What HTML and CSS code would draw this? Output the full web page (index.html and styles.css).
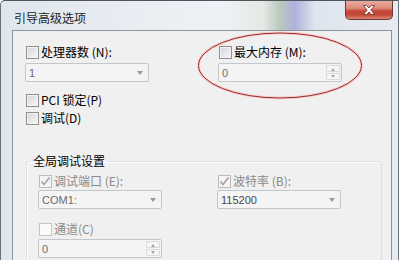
FILE: index.html
```html
<!DOCTYPE html>
<html lang="zh-CN">
<head>
  <meta charset="UTF-8">
  <title>引导高级选项</title>
  <link rel="stylesheet" href="styles.css">
</head>
<body>
<div class="window">
  <div class="titlebar">
    <span class="title">引导高级选项</span>
    <div class="close-btn">
      <svg width="12" height="10" viewBox="0 0 12 10">
        <path d="M0.5 0.5 L3.6 0.5 L6 3 L8.4 0.5 L11.5 0.5 L7.8 5 L11.5 9.5 L8.4 9.5 L6 7 L3.6 9.5 L0.5 9.5 L4.2 5 Z" fill="#fff" stroke="#6a2c24" stroke-width="0.8"/>
      </svg>
    </div>
  </div>

  <div class="frame">
    <div class="pane">
      <div class="two-col">
        <div class="field">
          <label class="check-label"><span class="cb"></span>处理器数 (N):</label>
          <div class="combo"><span class="value">1</span><span class="arrow"></span></div>
        </div>
        <div class="field">
          <label class="check-label"><span class="cb"></span>最大内存 (M):</label>
          <div class="combo spin"><span class="value">0</span>
            <span class="spin-btns"><span class="up"></span><span class="down"></span></span>
          </div>
        </div>
      </div>

      <label class="check-label row-pci"><span class="cb"></span>PCI 锁定(P)</label>
      <label class="check-label row-debug"><span class="cb"></span>调试(D)</label>

      <fieldset class="group">
        <legend>全局调试设置</legend>
        <div class="group-body">
          <div class="two-col inner">
            <div class="field">
              <label class="check-label disabled"><span class="cb checked"><svg width="11" height="11" viewBox="0 0 11 11"><path d="M1.5 5.5 L4 8.5 L9.5 1.5" fill="none" stroke="#a3a3a3" stroke-width="1.6"/></svg></span>调试端口 (E):</label>
              <div class="combo small"><span class="value">COM1:</span><span class="arrow"></span></div>
            </div>
            <div class="field">
              <label class="check-label disabled"><span class="cb checked"><svg width="11" height="11" viewBox="0 0 11 11"><path d="M1.5 5.5 L4 8.5 L9.5 1.5" fill="none" stroke="#a3a3a3" stroke-width="1.6"/></svg></span>波特率 (B):</label>
              <div class="combo small dark"><span class="value">115200</span><span class="arrow"></span></div>
            </div>
          </div>
          <div class="field row-channel">
            <label class="check-label disabled"><span class="cb light"></span>通道(C)</label>
            <div class="combo spin"><span class="value">0</span>
              <span class="spin-btns"><span class="up"></span><span class="down"></span></span>
            </div>
          </div>
        </div>
      </fieldset>
    </div>
  </div>

  <svg class="mark" width="399" height="260" viewBox="0 0 399 260">
    <ellipse cx="280" cy="65.5" rx="81.5" ry="32.5" fill="none" stroke="#f7cfcf" stroke-width="3"/>
    <ellipse cx="280" cy="65.5" rx="81.5" ry="32.5" fill="none" stroke="#9b2a2a" stroke-width="1"/>
  </svg>
</div>
</body>
</html>
```

FILE: styles.css
```css
body {
  margin: 0;
  font-family: "Noto Sans CJK SC", "Noto Sans", sans-serif;
  font-size: 12px;
  color: #000;
}

.window {
  width: 399px;
  height: 260px;
  box-sizing: border-box;
  position: relative;
  overflow: hidden;
  display: flex;
  flex-direction: column;
  border-top: 1px solid #4f555c;
  border-left: 1px solid #6b7178;
  border-right: 1px solid #6b7178;
  border-top-left-radius: 5px;
  background: linear-gradient(to right, #dfe6ed 0%, #eef2f6 55%, #e4e9e6 66%, #bccbbd 70%, #aeb0dc 74%, #dfe5ee 79%, #e6ebf1 100%);
}

.titlebar {
  height: 29px;
  display: flex;
  align-items: flex-start;
  flex-shrink: 0;
}

.title {
  padding: 4px 0 0 13px;
  line-height: 26px;
  color: #1e1e1e;
}

.close-btn {
  margin-left: auto;
  margin-right: 5px;
  width: 48px;
  height: 19px;
  box-sizing: border-box;
  border: 1px solid #6d3b33;
  border-top: none;
  border-radius: 0 0 5px 5px;
  background: linear-gradient(to bottom, #e9ab9e 0%, #dc8b7d 40%, #c7493b 55%, #c24535 75%, #d98574 100%);
  display: flex;
  align-items: center;
  justify-content: center;
}

.frame {
  flex: 1;
  min-height: 0;
  display: flex;
  padding: 0 6px 0 11px;
}

.pane {
  flex: 1;
  background: #f0f0f0;
  border: 1px solid #8d9499;
  border-bottom: none;
  padding: 14px 9px 0 13px;
  overflow: hidden;
}

.two-col {
  display: grid;
  grid-template-columns: 193px 1fr;
}

.check-label {
  display: flex;
  align-items: center;
  gap: 2px;
  height: 14px;
  line-height: 14px;
  white-space: nowrap;
}

.check-label.disabled {
  color: #8a8a8a;
}

.cb {
  width: 13px;
  height: 13px;
  box-sizing: border-box;
  border: 1px solid #8e8f8f;
  background: linear-gradient(135deg, #d2d4d8 0%, #eeeeee 70%, #f6f6f6 100%);
  box-shadow: inset 0 0 0 1px #f4f4f4;
  flex-shrink: 0;
  display: flex;
  align-items: center;
  justify-content: center;
}

.cb.checked {
  border-color: #bcbcbc;
  background: #f4f4f4;
  box-shadow: none;
}

.cb.light {
  border-color: #c4c4c4;
  background: #fafafa;
  box-shadow: none;
}

.combo {
  margin-top: 4px;
  margin-left: -1px;
  width: 124px;
  height: 19px;
  box-sizing: border-box;
  border: 1px solid #c3c6cb;
  border-radius: 2px;
  background: #f4f4f4;
  display: flex;
  align-items: center;
  padding-left: 3px;
  color: #6d6d6d;
  font-family: "Liberation Sans", sans-serif;
  font-size: 11px;
}

.combo.small {
  margin-top: 2px;
}

.combo.dark {
  color: #4a4a4a;
}

.arrow {
  margin-left: auto;
  margin-right: 5px;
  width: 0;
  height: 0;
  border-left: 3.5px solid transparent;
  border-right: 3.5px solid transparent;
  border-top: 4px solid #9a9a9a;
}

.spin-btns {
  margin-left: auto;
  margin-right: 1px;
  width: 14px;
  height: 15px;
  display: flex;
  flex-direction: column;
  gap: 1px;
}

.spin-btns span {
  flex: 1;
  border: 1px solid #dadada;
  border-radius: 1px;
  background: #f6f6f6;
  position: relative;
}

.spin-btns .up::after,
.spin-btns .down::after {
  content: "";
  position: absolute;
  left: 4px;
  top: 2px;
  border-left: 2.5px solid transparent;
  border-right: 2.5px solid transparent;
}

.spin-btns .up::after {
  border-bottom: 3px solid #a8a8a8;
}

.spin-btns .down::after {
  top: 1px;
  border-top: 3px solid #a8a8a8;
}

.row-pci {
  margin-top: 11px;
}

.row-debug {
  margin-top: 4px;
}

.group {
  margin: 29px 0 0 0;
  padding: 6px 0 30px 4px;
  border: 1px solid #d5dfe5;
  border-radius: 3px;
  box-shadow: inset 0 1px 0 #fff, inset 1px 0 0 #fff;
}

.group legend {
  padding: 0 2px;
  line-height: 14px;
  font-size: 12px;
}

.group-body {
  padding-left: 8px;
}

.two-col.inner {
  grid-template-columns: 179px 1fr;
}

.row-channel {
  margin-top: 13px;
}

.row-channel .combo {
  margin-top: 3px;
}

.mark {
  position: absolute;
  left: -1px;
  top: -1px;
  pointer-events: none;
}
```
